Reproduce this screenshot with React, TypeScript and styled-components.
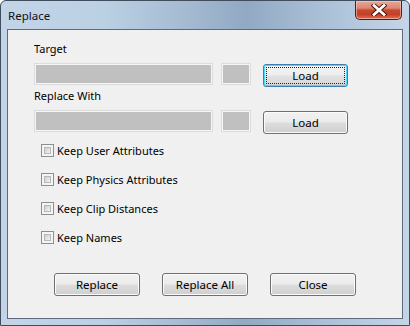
import React from "react";
import styled, { createGlobalStyle, css } from "styled-components";

const Global = createGlobalStyle`
  html, body { margin: 0; padding: 0; background: #ffffff; }
  body { font-family: "Noto Sans", "Open Sans", sans-serif; }
  #root { width: 410px; height: 326px; }
`;

const Window = styled.div`
  box-sizing: border-box;
  width: 410px;
  height: 326px;
  display: flex;
  flex-direction: column;
  border: 1px solid #3f4d5c;
  border-radius: 6px 6px 0 0;
  padding: 0 6px 6px 6px;
  background: linear-gradient(
    to right,
    #c3d4e7 0%,
    #bcd0e4 25%,
    #a5bbd2 45%,
    #91a9c3 60%,
    #a9bfd6 78%,
    #c5d5e8 100%
  );
  overflow: hidden;
`;

const TitleBar = styled.div`
  height: 28px;
  display: flex;
  align-items: flex-start;
  justify-content: space-between;
  padding-left: 1px;
`;

const Title = styled.span`
  font-family: "Noto Sans", sans-serif;
  font-size: 11.5px;
  line-height: 29px;
  color: #111;
`;

const CloseButton = styled.div`
  box-sizing: border-box;
  width: 47px;
  height: 19px;
  margin-right: 1px;
  border: 1px solid #5a1c12;
  border-top: none;
  border-radius: 0 0 5px 5px;
  background: linear-gradient(
    to bottom,
    #e8a797 0%,
    #dc8670 40%,
    #c74a2e 50%,
    #c3402a 75%,
    #dd7454 100%
  );
  box-shadow: inset 0 0 0 1px rgba(255, 210, 200, 0.55);
  display: flex;
  align-items: center;
  justify-content: center;
`;

const Client = styled.div`
  flex: 1;
  border: 1px solid #5d6b7a;
  background: #f0f0f0;
  display: flex;
  flex-direction: column;
  padding: 12px 0 0 26px;
  font-family: "Noto Sans", sans-serif;
  font-size: 11px;
  color: #000;
`;

const Label = styled.div<{ $mt?: number }>`
  height: 16px;
  line-height: 14px;
  margin-top: ${(p) => p.$mt ?? 0}px;
`;

const Row = styled.div<{ $mt?: number }>`
  display: flex;
  align-items: flex-start;
  margin-top: ${(p) => p.$mt ?? 0}px;
`;

const Field = styled.div<{ $w: number }>`
  box-sizing: border-box;
  width: ${(p) => p.$w}px;
  height: 22px;
  background: #c0c0c0;
  border: 1px solid #dcdcdc;
  box-shadow: inset 0 0 0 1px #f6f6f6;
`;

const Button = styled.div<{ $focus?: boolean; $w?: number; $mt?: number }>`
  box-sizing: border-box;
  width: ${(p) => p.$w ?? 86}px;
  height: 23px;
  margin-top: ${(p) => p.$mt ?? 0}px;
  border: 1px solid #707070;
  border-radius: 3px;
  background: linear-gradient(
    to bottom,
    #f2f2f2 0%,
    #ebebeb 48%,
    #dddddd 52%,
    #cfcfcf 100%
  );
  box-shadow: inset 0 0 0 1px #fbfbfb;
  display: flex;
  align-items: center;
  justify-content: center;
  font-size: 11.5px;
  color: #000;
  position: relative;
  ${(p) =>
    p.$focus &&
    css`
      border-color: #3c7fb1;
      box-shadow: inset 0 0 0 1px #48d8fb;
      background: linear-gradient(
        to bottom,
        #f4f4f4 0%,
        #eeeeee 48%,
        #e2e2e2 52%,
        #d6d6d6 100%
      );
    `}
`;

const FocusRect = styled.div`
  position: absolute;
  inset: 2px;
  border: 1px dotted #222;
`;

const CheckList = styled.div`
  display: flex;
  flex-direction: column;
  margin-top: 2px;
  padding-left: 7px;
`;

const CheckRow = styled.label`
  height: 29px;
  display: flex;
  align-items: center;
  gap: 3px;
`;

const CheckBox = styled.span`
  box-sizing: border-box;
  width: 13px;
  height: 13px;
  border: 1px solid #8e8f8f;
  background: #f4f4f4;
  padding: 2px;
  display: flex;
`;

const CheckInner = styled.span`
  flex: 1;
  background: linear-gradient(135deg, #d0d0d0 0%, #e4e4e4 60%, #f4f4f4 100%);
  border: 1px solid #b8b8b8;
`;

const ButtonBar = styled.div`
  display: flex;
  justify-content: center;
  gap: 22px;
  margin-top: 21px;
  margin-left: -26px;
`;

const CloseX = () => (
  <svg width="16" height="12" viewBox="0 0 16 12">
    <path
      d="M3 1.5 L13 10.5 M13 1.5 L3 10.5"
      stroke="#4a1208"
      strokeWidth="4.6"
      strokeLinecap="square"
      fill="none"
    />
    <path
      d="M3 1.5 L13 10.5 M13 1.5 L3 10.5"
      stroke="#ffffff"
      strokeWidth="2.8"
      strokeLinecap="square"
      fill="none"
    />
  </svg>
);

const checks = [
  "Keep User Attributes",
  "Keep Physics Attributes",
  "Keep Clip Distances",
  "Keep Names",
];

export default function App() {
  return (
    <>
      <Global />
      <Window>
        <TitleBar>
          <Title>Replace</Title>
          <CloseButton>
            <CloseX />
          </CloseButton>
        </TitleBar>
        <Client>
          <Label>Target</Label>
          <Row $mt={5}>
            <Field $w={179} />
            <Field $w={30} style={{ marginLeft: 8 }} />
            <Button $focus $w={85} $mt={1} style={{ marginLeft: 12 }}>
              <FocusRect />
              Load
            </Button>
          </Row>
          <Label $mt={2}>Replace With</Label>
          <Row $mt={5}>
            <Field $w={179} />
            <Field $w={30} style={{ marginLeft: 8 }} />
            <Button $w={85} $mt={1} style={{ marginLeft: 12 }}>
              Load
            </Button>
          </Row>
          <CheckList>
            {checks.map((c) => (
              <CheckRow key={c}>
                <CheckBox>
                  <CheckInner />
                </CheckBox>
                {c}
              </CheckRow>
            ))}
          </CheckList>
          <ButtonBar>
            <Button>Replace</Button>
            <Button>Replace All</Button>
            <Button>Close</Button>
          </ButtonBar>
        </Client>
      </Window>
    </>
  );
}
